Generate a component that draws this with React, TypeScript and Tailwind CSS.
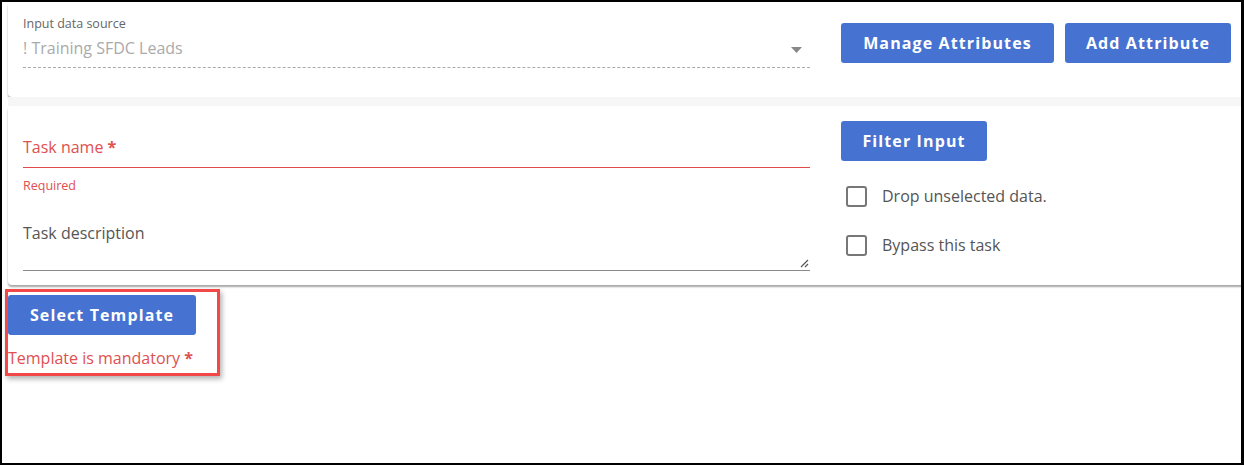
import React from "react";

const btn =
  "h-10 whitespace-nowrap rounded-[3px] bg-[#4672d1] px-[10px] text-[16px] font-bold tracking-[0.07em] text-white";

function Checkbox({ label }: { label: string }) {
  return (
    <div className="flex items-center gap-[15px] pl-[5px]">
      <div className="h-[21px] w-[21px] rounded-[3px] border-2 border-[#777]" />
      <span className="text-[16px] text-[#555]">{label}</span>
    </div>
  );
}

export default function App() {
  return (
    <div
      className="relative h-[465px] w-[1244px] overflow-hidden border-b-2 border-l-2 border-r-[3px] border-t-2 border-black bg-white"
      style={{ fontFamily: '"Open Sans", "Noto Sans", sans-serif' }}
    >
      <div className="ml-[6px] w-[1250px]">
        {/* Card 1 */}
        <div className="flex rounded-[4px] bg-white pb-[29px] pt-[14px] shadow-[0_2px_2px_rgba(0,0,0,0.35)]">
          <div className="ml-[15px] w-[787px]">
            <div className="text-[12.5px] leading-[16px] text-[#666]">Input data source</div>
            <div className="relative mt-[5px] flex h-[31px] items-start justify-between border-b border-dashed border-b-[#aaa]">
              <span className="text-[16px] leading-[22px] text-[#aaa]">! Training SFDC Leads</span>
              <svg className="mr-[8px] mt-[10px]" width="11" height="6" viewBox="0 0 11 6">
                <path d="M0 0 L11 0 L5.5 6 Z" fill="#888" />
              </svg>
            </div>
          </div>
          <div className="ml-[31px] mt-[7px] flex gap-[11px]">
            <button className={btn + " w-[213px]"}>Manage Attributes</button>
            <button className={btn + " w-[166px]"}>Add Attribute</button>
          </div>
        </div>

        {/* gap band */}
        <div className="h-[9px] bg-[#f6f6f6]" />

        {/* Card 2 */}
        <div className="flex rounded-[4px] bg-white pb-[14px] pt-[15px] shadow-[0_2px_2px_rgba(0,0,0,0.35)]">
          <div className="ml-[15px] w-[787px]">
            <div className="mt-[15px] flex h-[31px] items-start">
              <span className="text-[16px] leading-[22px] text-[#e05050]">
                Task name <span className="font-bold">*</span>
              </span>
            </div>
            <div className="h-px bg-[#e04a4a]" />
            <div className="mt-[10px] text-[12.5px] leading-[16px] text-[#e05050]">Required</div>
            <div className="relative mt-[27px] h-[49px]">
              <span className="text-[16px] leading-[22px] text-[#555]">Task description</span>
              <svg className="absolute bottom-[2px] right-[1px]" width="9" height="9" viewBox="0 0 9 9">
                <path d="M1 8 L8 1 M5 8 L8 5" stroke="#555" strokeWidth="1.2" />
              </svg>
            </div>
            <div className="h-px bg-[#8a8a8a]" />
          </div>
          <div className="ml-[31px] flex flex-col">
            <button className={btn + " w-[146px]"}>Filter Input</button>
            <div className="mt-[23px]">
              <Checkbox label="Drop unselected data." />
            </div>
            <div className="mt-[25px]">
              <Checkbox label="Bypass this task" />
            </div>
          </div>
        </div>

        {/* Select template */}
        <div className="mt-[10px]">
          <button className={btn + " w-[188px]"}>Select Template</button>
          <div className="mt-[12px] text-[16px] leading-[22px] text-[#e05050]">
            Template is mandatory <span className="font-bold">*</span>
          </div>
        </div>
      </div>

      {/* highlight box */}
      <div className="absolute left-[3px] top-[287px] h-[87px] w-[215px] border-[3px] border-[#f24848] shadow-[2px_3px_5px_rgba(0,0,0,0.3)]" />
    </div>
  );
}
